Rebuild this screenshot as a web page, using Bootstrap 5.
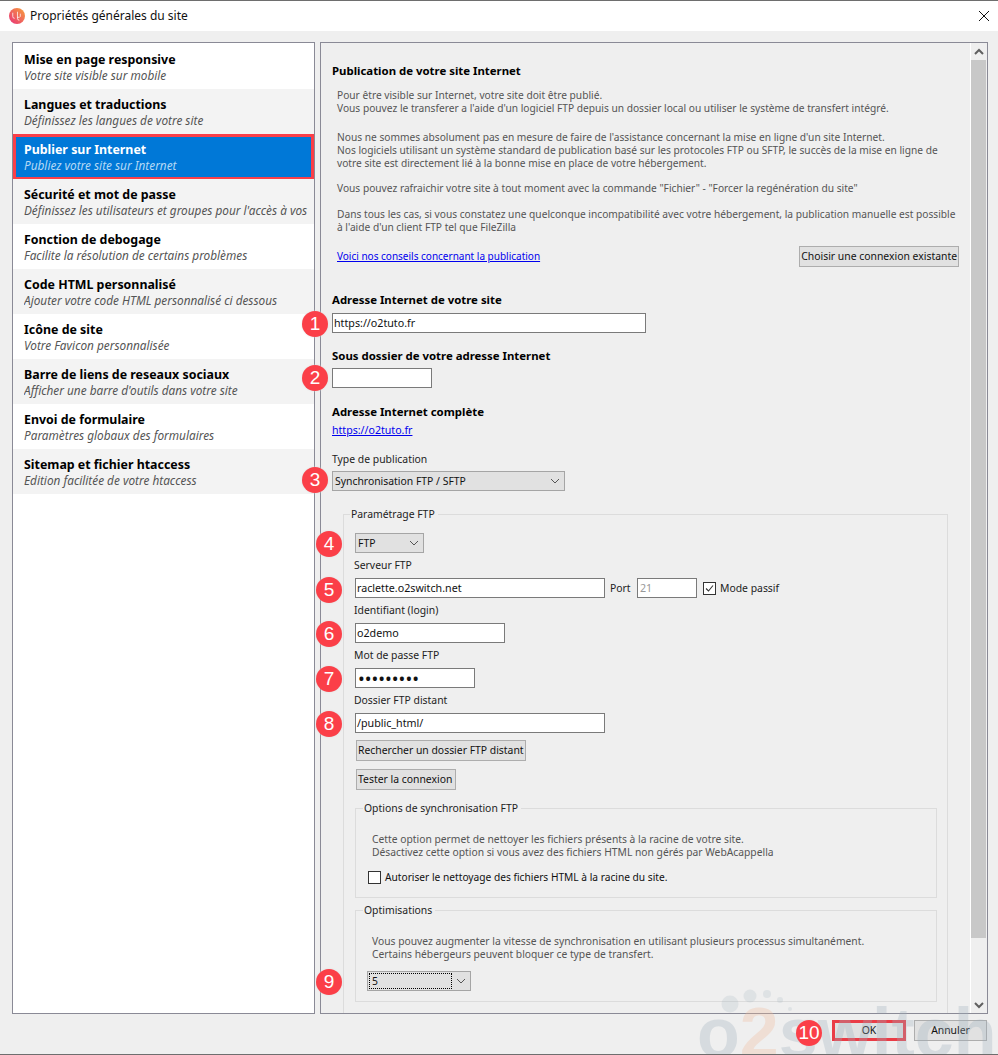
<!DOCTYPE html>
<html lang="fr">
<head>
    <meta charset="UTF-8">
    <meta name="viewport" content="width=device-width, initial-scale=1.0">
    <title>Propriétés générales du site</title>
    <link href="https://cdn.jsdelivr.net/npm/bootstrap@5.3.1/dist/css/bootstrap.min.css" rel="stylesheet">
    <style>
        html, body { height: 1055px; overflow: hidden; }
        body {
            background-color: #efefef;
            color: #111;
            font-family: "Noto Sans", "DejaVu Sans", sans-serif;
            font-size: 10.4px;
            line-height: 13px;
        }
        /* fenetre */
        .win { height: 1055px; border-top: 1px solid #6e6e6e; border-bottom: 1px solid #6e6e6e; position: relative; overflow: hidden; }
        .win-title { height: 30px; background: #fff; padding-left: 9px; gap: 5px; font: 12px/30px "Noto Sans", sans-serif; color: #111; }
        .win-title svg { flex: none; }
        .win-close { width: 14px; height: 14px; margin-right: 7px; }
        .win-body { height: 983px; padding: 11px 10px 0 12px; gap: 5px; }

        /* menu de gauche */
        .side-menu { width: 303px; height: 972px; flex: none; border: 1px solid #8a8a96; background: #fff; padding-top: 1px; border-radius: 0; }
        .side-item { height: 45px; padding: 8px 0 0 11px; border: 0; border-radius: 0 !important; background: #fff; color: #000; margin: 0; }
        .side-item:nth-child(even) { background: #f3f3f3; }
        .side-item b { display: block; font-size: 12.4px; line-height: 15px; font-weight: 700; }
        .side-item i { display: block; font-size: 11.8px; line-height: 16px; color: #555; white-space: nowrap; overflow: hidden; }
        .side-item.selected { background: #0078d7; color: #fff; outline: 3px solid #fb3f48; outline-offset: -3px; height: 46px; margin-bottom: -1px; position: relative; }
        .side-item.selected i { color: #b5d9f5; }

        /* panneau de droite */
        .main-panel { width: 668px; height: 972px; flex: none; border: 1px solid #8a8a96; position: relative; overflow: hidden; }
        .main-scroll { position: relative; padding: 0 0 0 11px; height: 970px; overflow: hidden; }
        .scroll-track { position: absolute; right: 0; top: 0; bottom: 0; width: 17px; border-left: 1px solid #fff; background: #efefef; }
        .scroll-thumb { position: absolute; left: 0; right: 1px; top: 17px; height: 878px; background: #c8c8c8; }
        .scroll-arrow { position: absolute; left: 3px; width: 10px; height: 7px; }

        .main-title { font-weight: 700; font-size: 11.4px; margin: 21px 0 12px; line-height: 13px; color: #000; }
        .help-text { color: #555; font-size: 10.2px; padding-left: 5px; margin: 0 0 12px; }
        .help-text.gap-before { margin-top: 16px; }
        .help-text.gap-after { margin-bottom: 13px; }
        .link-row { height: 21px; padding-left: 5px; margin-top: 0; }
        .link-row a { font-size: 10px; }
        a { color: #0000ee; }
        .fld-title { font-weight: 700; font-size: 11.4px; line-height: 13px; color: #000; }
        .fld-label { line-height: 13px; color: #222; }
        .stack-label { margin-left: -1px; }
        .site-link { font-size: 10.6px; }
        .txt-input { display: block; height: 20px; border: 1px solid #7a7a7a; background: #fff; padding: 0 1px; font-size: 10.7px; line-height: 18px; color: #111; }
        .txt-input.w-314 { width: 314px; }
        .txt-input.w-100px { width: 100px; }
        .txt-input.w-250 { width: 250px; }
        .txt-input.w-150 { width: 150px; }
        .txt-input.w-120 { width: 120px; }
        .txt-input.w-60 { width: 60px; color: #999; padding-left: 2px; }
        .txt-input.pwd { font-size: 18px; padding-left: 2px; }
        .fake-select { height: 20px; border: 1px solid #a5a5a5; background: #e1e1e1; padding: 0 2px; line-height: 18px; }
        .fake-select svg { width: 8px; height: 5px; margin-right: 3px; flex: none; }
        .win-btn { height: 21px; padding: 0 1px; border: 1px solid #adadad; background: #e1e1e1; border-radius: 0; font-size: 10.4px; line-height: 19px; color: #111; }
        .win-btn:hover { background: #e1e1e1; }
        .test-btn { width: 100px; }
        .ftp-box { border: 1px solid #dcdcdc; border-bottom: 0; width: 605px; margin: 23px 0 0 11px; padding: 11px 11px 0 11px; height: 520px; position: relative; }
        .ftp-box > .box-legend { left: 6px; }
        .sub-box { border: 1px solid #dcdcdc; width: 582px; position: relative; padding-left: 16px; }
        .sub-text { padding-top: 24px; color: #555; font-size: 10.3px; }
        .box-legend { position: absolute; top: -7px; left: 7px; padding: 0 3px 0 1px; background: #efefef; line-height: 13px; color: #222; }
        .check-box { width: 13px; height: 13px; border: 1px solid #333; background: #fff; flex: none; }
        .check-box svg { display: block; }
        .check-row { font-size: 10.2px; margin-top: 12px; margin-left: -4px; }
        .port-label { width: 27px; margin-left: 5px; flex: none; }
        .dotted-val { border: 1px dotted #000; flex: 1; height: 16px; line-height: 14px; padding-left: 2px; margin: 1px 2px 1px 1px; }

        /* pastilles rouges du tuto */
        .mark-dot { position: absolute; width: 26px; height: 26px; border-radius: 50%; background: #fb3f48; color: #fff; font: 19px/26px "Liberation Sans", sans-serif; text-align: center; transform: translate(-13px, -13px); box-shadow: 0 0 2px #ddd; z-index: 5; }

        .win-footer { height: 40px; padding: 6px 11px 0 0; gap: 8px; justify-content: flex-end; }
        .footer-btn { width: 73px; height: 21px; padding: 0; line-height: 19px; }
        .footer-btn.ok-btn { width: 74px; outline: 3px solid #ea3c46; outline-offset: -3px; }

        .wm-text { position: absolute; left: 697px; top: 997px; font: 700 70px/70px "Liberation Sans", sans-serif; color: #9fb0bd; opacity: .3; pointer-events: none; z-index: 4; white-space: nowrap; }
        .wm-text span { color: #f0b898; }
        .wm-dots { position: absolute; left: 720px; top: 985px; z-index: 4; opacity: .2; }
    </style>
</head>
<body>
<div class="win">
    <div class="win-title d-flex align-items-center">
        <svg width="16" height="16" viewBox="0 0 17 17">
            <defs><linearGradient id="logoGrad" x1="1" y1="0" x2="0" y2="1"><stop offset="0" stop-color="#f7a13a"/><stop offset="1" stop-color="#e8307a"/></linearGradient></defs>
            <circle cx="8.5" cy="8.5" r="8.5" fill="url(#logoGrad)"/>
            <path d="M4 5v4q0 2 2 2M9 4v7q0 2 2 2M12 6v3q0 1-3 1" fill="none" stroke="#fff" stroke-width="1" opacity=".8"/>
        </svg>
        <span>Propriétés générales du site</span>
        <svg class="win-close ms-auto" viewBox="0 0 14 14"><path d="M2 2l10 10M12 2L2 12" stroke="#111" stroke-width="1" fill="none"/></svg>
    </div>

    <div class="win-body d-flex">
        <div class="side-menu list-group">
            <div class="list-group-item side-item"><b>Mise en page responsive</b><i>Votre site visible sur mobile</i></div>
            <div class="list-group-item side-item"><b>Langues et traductions</b><i>Définissez les langues de votre site</i></div>
            <div class="list-group-item side-item selected"><b>Publier sur Internet</b><i>Publiez votre site sur Internet</i></div>
            <div class="list-group-item side-item"><b>Sécurité et mot de passe</b><i>Définissez les utilisateurs et groupes pour l'accès à vos</i></div>
            <div class="list-group-item side-item"><b>Fonction de debogage</b><i>Facilite la résolution de certains problèmes</i></div>
            <div class="list-group-item side-item"><b>Code HTML personnalisé</b><i>Ajouter votre code HTML personnalisé ci dessous</i></div>
            <div class="list-group-item side-item"><b>Icône de site</b><i>Votre Favicon personnalisée</i></div>
            <div class="list-group-item side-item"><b>Barre de liens de reseaux sociaux</b><i>Afficher une barre d'outils dans votre site</i></div>
            <div class="list-group-item side-item"><b>Envoi de formulaire</b><i>Paramètres globaux des formulaires</i></div>
            <div class="list-group-item side-item"><b>Sitemap et fichier htaccess</b><i>Edition facilitée de votre htaccess</i></div>
        </div>

        <div class="main-panel">
            <div class="main-scroll">
                <div class="main-title">Publication de votre site Internet</div>
                <p class="help-text mb-0">Pour être visible sur Internet, votre site doit être publié.<br>Vous pouvez le transferer a l'aide d'un logiciel FTP depuis un dossier local ou utiliser le système de transfert intégré.</p>
                <p class="help-text gap-before">Nous ne sommes absolument pas en mesure de faire de l'assistance concernant la mise en ligne d'un site Internet.<br>Nos logiciels utilisant un système standard de publication basé sur les protocoles FTP ou SFTP, le succès de la mise en ligne de<br>votre site est directement lié à la bonne mise en place de votre hébergement.</p>
                <p class="help-text gap-after">Vous pouvez rafraichir votre site à tout moment avec la commande "Fichier" - "Forcer la regénération du site"</p>
                <p class="help-text">Dans tous les cas, si vous constatez une quelconque incompatibilité avec votre hébergement, la publication manuelle est possible<br>à l'aide d'un client FTP tel que FileZilla</p>
                <div class="link-row d-flex align-items-center justify-content-between" style="width:627px">
                    <a href="#">Voici nos conseils concernant la publication</a>
                    <button class="btn win-btn" type="button">Choisir une connexion existante</button>
                </div>

                <div class="fld-title" style="margin-top:26px">Adresse Internet de votre site</div>
                <div class="txt-input w-314" style="margin-top:7px">https://o2tuto.fr</div>
                <div class="fld-title" style="margin-top:16px">Sous dossier de votre adresse Internet</div>
                <div class="txt-input w-100px" style="margin-top:6px"></div>
                <div class="fld-title" style="margin-top:17px">Adresse Internet complète</div>
                <div style="margin-top:6px"><a class="site-link" href="#">https://o2tuto.fr</a></div>
                <div class="fld-label" style="margin-top:16px">Type de publication</div>
                <div class="fake-select d-flex align-items-center justify-content-between" style="width:233px;margin-top:5px">
                    <span>Synchronisation FTP / SFTP</span>
                    <svg viewBox="0 0 8 5"><path d="M0 0l4 4 4-4" fill="none" stroke="#555"/></svg>
                </div>

                <div class="ftp-box">
                    <div class="box-legend">Paramétrage FTP</div>
                    <div class="fake-select d-flex align-items-center justify-content-between" style="width:69px;margin-top:7px">
                        <span>FTP</span>
                        <svg viewBox="0 0 8 5"><path d="M0 0l4 4 4-4" fill="none" stroke="#555"/></svg>
                    </div>
                    <div class="fld-label stack-label" style="margin-top:6px">Serveur FTP</div>
                    <div class="d-flex align-items-center" style="margin-top:6px">
                        <div class="txt-input w-250">raclette.o2switch.net</div>
                        <span class="fld-label port-label">Port</span>
                        <div class="txt-input w-60">21</div>
                        <span class="check-box" style="margin:0 4px 0 6px"><svg width="11" height="11" viewBox="0 0 11 11"><path d="M2 5.5l2.5 2.5L9 2.5" fill="none" stroke="#333" stroke-width="1.1"/></svg></span>
                        <span class="fld-label">Mode passif</span>
                    </div>
                    <div class="fld-label stack-label" style="margin-top:6px">Identifiant (login)</div>
                    <div class="txt-input w-150" style="margin-top:6px">o2demo</div>
                    <div class="fld-label stack-label" style="margin-top:6px">Mot de passe FTP</div>
                    <div class="txt-input w-120 pwd" style="margin-top:6px">•••••••••</div>
                    <div class="fld-label stack-label" style="margin-top:6px">Dossier FTP distant</div>
                    <div class="txt-input w-250" style="margin-top:6px">/public_html/</div>
                    <div class="d-flex flex-column align-items-start" style="gap:8px;margin:7px 0 0 1px">
                        <button class="btn win-btn" type="button">Rechercher un dossier FTP distant</button>
                        <button class="btn win-btn test-btn text-start" type="button">Tester la connexion</button>
                    </div>

                    <div class="sub-box" style="height:90px;margin-top:18px">
                        <div class="box-legend">Options de synchronisation FTP</div>
                        <p class="sub-text mb-0">Cette option permet de nettoyer les fichiers présents à la racine de votre site.<br>Désactivez cette option si vous avez des fichiers HTML non gérés par WebAcappella</p>
                        <div class="check-row d-flex align-items-center gap-1">
                            <span class="check-box"></span>
                            <span>Autoriser le nettoyage des fichiers HTML à la racine du site.</span>
                        </div>
                    </div>

                    <div class="sub-box" style="height:92px;margin-top:12px;padding-left:11px">
                        <div class="box-legend">Optimisations</div>
                        <p class="sub-text mb-0" style="padding-left:5px">Vous pouvez augmenter la vitesse de synchronisation en utilisant plusieurs processus simultanément.<br>Certains hébergeurs peuvent bloquer ce type de transfert.</p>
                        <div class="fake-select d-flex align-items-center p-0" style="width:104px;margin-top:10px">
                            <span class="dotted-val">5</span>
                            <svg viewBox="0 0 8 5" style="margin:0 5px 0 3px"><path d="M0 0l4 4 4-4" fill="none" stroke="#555"/></svg>
                        </div>
                    </div>
                </div>

                <div class="scroll-track">
                    <svg class="scroll-arrow" style="top:5px" viewBox="0 0 10 7"><path d="M1 6l4-4 4 4" fill="none" stroke="#606060" stroke-width="2"/></svg>
                    <div class="scroll-thumb"></div>
                    <svg class="scroll-arrow" style="bottom:4px" viewBox="0 0 10 7"><path d="M1 1l4 4 4-4" fill="none" stroke="#606060" stroke-width="2"/></svg>
                </div>
            </div>
        </div>
    </div>

    <div class="win-footer d-flex">
        <button class="btn win-btn footer-btn ok-btn" type="button">OK</button>
        <button class="btn win-btn footer-btn" type="button">Annuler</button>
    </div>

    <svg class="wm-dots" width="100" height="40" viewBox="0 0 100 40" fill="#9fb0bd"><circle cx="10" cy="18" r="8.5"/><circle cx="30" cy="10" r="6.5"/><circle cx="47" cy="8" r="4"/><circle cx="60" cy="14" r="3"/><circle cx="70" cy="23" r="2"/></svg>
    <div class="wm-text">o<span>2</span>switch</div>

    <!-- pastilles numerotees -->
    <div class="mark-dot" style="left:315px;top:323px">1</div>
    <div class="mark-dot" style="left:315px;top:377px">2</div>
    <div class="mark-dot" style="left:315px;top:479px">3</div>
    <div class="mark-dot" style="left:329px;top:543px">4</div>
    <div class="mark-dot" style="left:329px;top:589px">5</div>
    <div class="mark-dot" style="left:329px;top:633px">6</div>
    <div class="mark-dot" style="left:329px;top:678px">7</div>
    <div class="mark-dot" style="left:329px;top:723px">8</div>
    <div class="mark-dot" style="left:329px;top:981px">9</div>
    <div class="mark-dot" style="left:809px;top:1032px">10</div>
</div>
<script src="https://cdn.jsdelivr.net/npm/bootstrap@5.3.1/dist/js/bootstrap.bundle.min.js"></script>
</body>
</html>
